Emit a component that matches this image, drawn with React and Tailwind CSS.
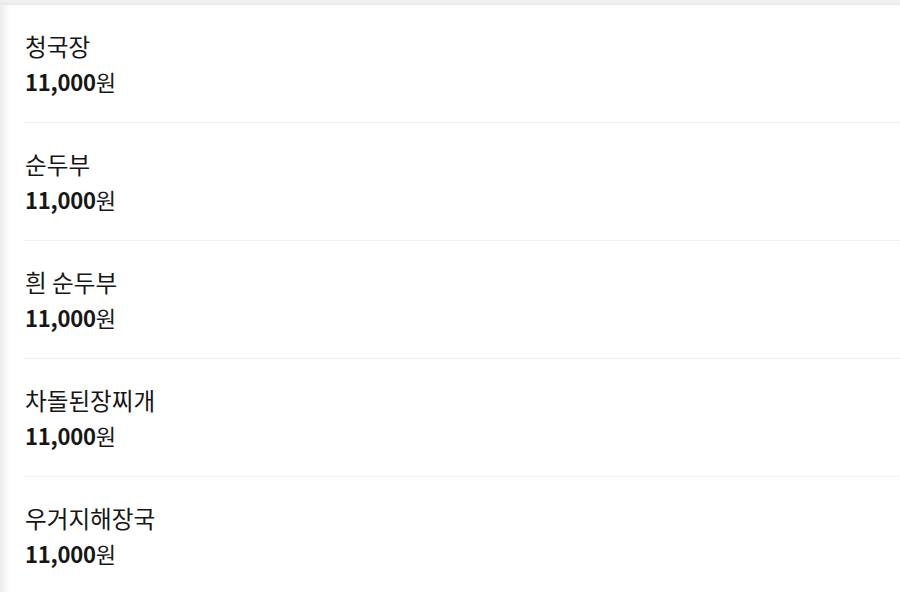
// 메뉴 목록 — 가격은 모두 동일
const menus = [
  { id: 1, name: '청국장', price: '11,000' },
  { id: 2, name: '순두부', price: '11,000' },
  { id: 3, name: '흰 순두부', price: '11,000' },
  { id: 4, name: '차돌된장찌개', price: '11,000' },
  { id: 5, name: '우거지해장국', price: '11,000' },
]

export default function App() {
  return (
    <main
      className="h-[592px] w-[900px] overflow-hidden bg-white text-[#161616]"
      style={{ fontFamily: '"Noto Sans CJK KR", "Noto Sans", sans-serif' }}
    >
      {/* 상단 회색 띠 */}
      <div className="h-[5px] bg-gradient-to-b from-[#f2f2f2] to-[#e9e9e9]" />

      <div className="flex">
        {/* 왼쪽 그림자 */}
        <div className="w-[10px] shrink-0 bg-gradient-to-r from-[#ececec] to-white" />

        <ul className="flex-1 pl-[14px]">
          {menus.map((menu) => (
            <li key={menu.id} className="border-b border-[#f0f0f0] pt-6 pb-[23px] pl-px">
              <p className="text-[23.6px] leading-[34px]">{menu.name}</p>
              <p className="text-[22px] leading-[36px] tracking-[-0.2px]">
                <span className="font-bold">{menu.price}</span>원
              </p>
            </li>
          ))}
        </ul>
      </div>
    </main>
  )
}
